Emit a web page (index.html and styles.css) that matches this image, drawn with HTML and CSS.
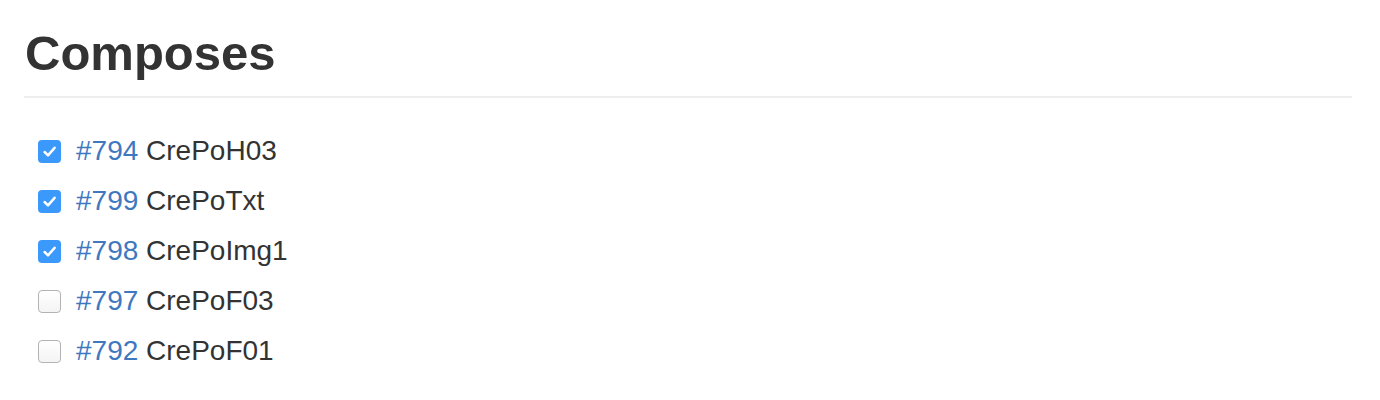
FILE: index.html
```html
<!DOCTYPE html>
<html>
<head>
<meta charset="utf-8">
<link rel="stylesheet" href="styles.css">
</head>
<body>
<div class="markdown">
  <h2 class="title">Composes</h2>
  <ul class="tasks">
    <li class="task"><span class="box checked"><svg viewBox="0 0 23 23" width="23" height="23"><path d="M6.6 12 L10 15.3 L16.6 7.8" fill="none" stroke="#fff" stroke-width="2.5" stroke-linecap="round" stroke-linejoin="round"/></svg></span><a class="ref" href="#">#794</a> CrePoH03</li>
    <li class="task"><span class="box checked"><svg viewBox="0 0 23 23" width="23" height="23"><path d="M6.6 12 L10 15.3 L16.6 7.8" fill="none" stroke="#fff" stroke-width="2.5" stroke-linecap="round" stroke-linejoin="round"/></svg></span><a class="ref" href="#">#799</a> CrePoTxt</li>
    <li class="task"><span class="box checked"><svg viewBox="0 0 23 23" width="23" height="23"><path d="M6.6 12 L10 15.3 L16.6 7.8" fill="none" stroke="#fff" stroke-width="2.5" stroke-linecap="round" stroke-linejoin="round"/></svg></span><a class="ref" href="#">#798</a> CrePoImg1</li>
    <li class="task"><span class="box"></span><a class="ref" href="#">#797</a> CrePoF03</li>
    <li class="task"><span class="box"></span><a class="ref" href="#">#792</a> CrePoF01</li>
  </ul>
</div>
</body>
</html>
```

FILE: styles.css
```css
body {
  margin: 0;
  background: #fff;
  font-family: "Liberation Sans", Arial, sans-serif;
  color: #333;
}

.markdown {
  padding: 23px 28px 0 24px;
}

.title {
  margin: 0;
  font-size: 49px;
  font-weight: bold;
  line-height: 60px;
  padding: 0 0 13px 1px;
  border-bottom: 2px solid #eee;
  color: #333;
}

.tasks {
  list-style: none;
  margin: 28px 0 0 0;
  padding: 0 0 0 14px;
}

.task {
  display: flex;
  align-items: center;
  height: 50px;
  font-size: 28px;
  line-height: 50px;
  white-space: pre;
}

.box {
  display: inline-flex;
  width: 23px;
  height: 23px;
  box-sizing: border-box;
  border-radius: 4px;
  border: 1px solid #b3b3b3;
  background: linear-gradient(#ffffff, #f4f4f4);
  margin-right: 15px;
  flex: none;
}

.box.checked {
  border: none;
  background: #3b99fc;
}

.ref {
  color: #4078c0;
  text-decoration: none;
}
```
